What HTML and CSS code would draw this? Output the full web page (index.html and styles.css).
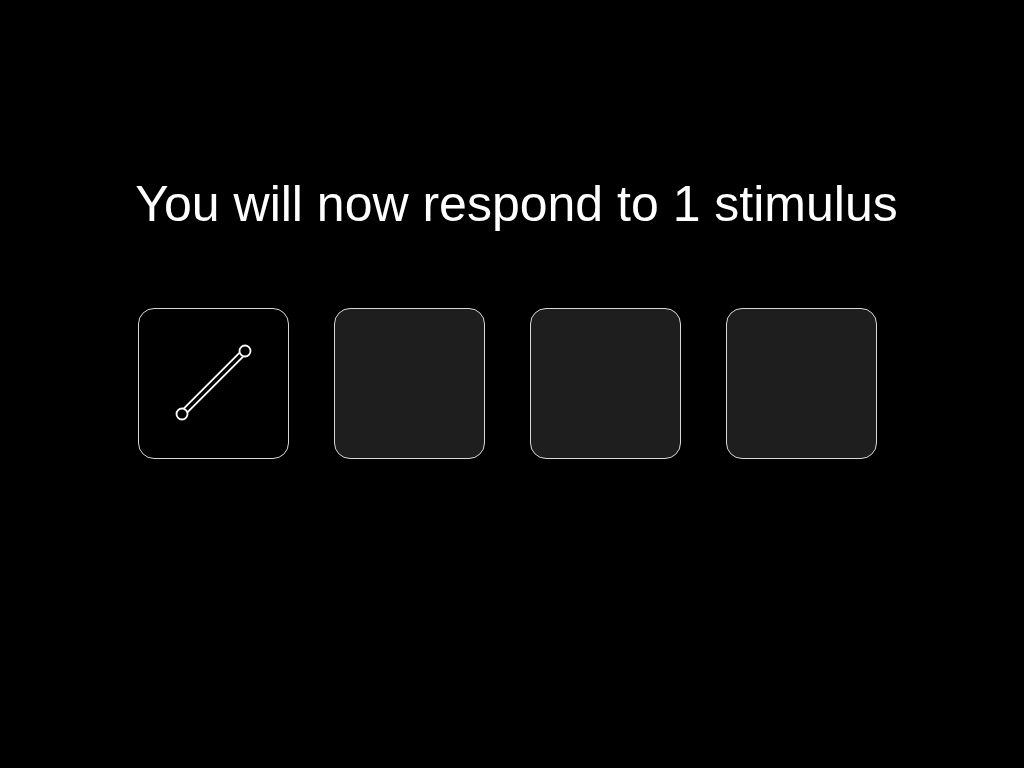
FILE: index.html
```html
<!DOCTYPE html>
<html lang="en">
<head>
<meta charset="utf-8">
<title>Stimulus</title>
<link rel="stylesheet" href="styles.css">
</head>
<body>
<main class="stage">
  <h1 class="prompt">You will now respond to 1 stimulus</h1>
  <div class="slots">
    <div class="slot slot-active">
      <svg class="glyph" viewBox="0 0 150 150" width="150" height="150" aria-hidden="true">
        <line x1="44" y1="106" x2="107" y2="43" stroke="#fff" stroke-width="7" stroke-linecap="butt"/>
        <line x1="44" y1="106" x2="107" y2="43" stroke="#000" stroke-width="3.4" stroke-linecap="butt"/>
        <circle cx="44" cy="106" r="5.5" fill="#000" stroke="#fff" stroke-width="1.8"/>
        <circle cx="107" cy="43" r="5.5" fill="#000" stroke="#fff" stroke-width="1.8"/>
      </svg>
    </div>
    <div class="slot"></div>
    <div class="slot"></div>
    <div class="slot"></div>
  </div>
</main>
</body>
</html>
```
FILE: styles.css
```css
html, body {
  margin: 0;
  padding: 0;
  background: #000;
}
.stage {
  width: 1024px;
  height: 768px;
  display: flex;
  flex-direction: column;
  font-family: "Liberation Sans", Arial, sans-serif;
  color: #fff;
}
.prompt {
  margin: 176px 0 0 0;
  padding-left: 9px;
  font-size: 50px;
  font-weight: normal;
  line-height: 56px;
  text-align: center;
}
.slots {
  display: flex;
  gap: 45px;
  margin-top: 76px;
  padding-left: 138px;
}
.slot {
  box-sizing: border-box;
  width: 151px;
  height: 151px;
  border: 1px solid #d8d8d8;
  border-radius: 16px;
  background: #1e1e1e;
  position: relative;
}
.slot-active {
  background: #000;
}
.glyph {
  display: block;
  position: absolute;
  left: -1px;
  top: -1px;
}
```
